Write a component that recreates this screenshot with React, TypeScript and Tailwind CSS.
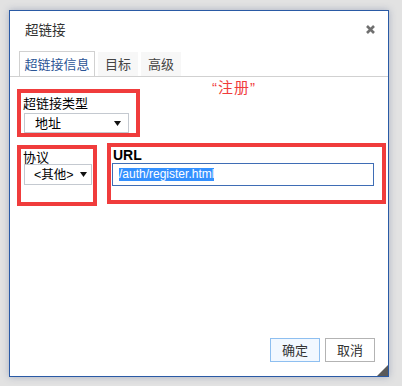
import React from "react";

const cjk = "font-['Noto_Sans_CJK_SC',sans-serif]";
const mix = "font-['Liberation_Sans','Noto_Sans_CJK_SC',sans-serif]";

function Arrow() {
  return (
    <svg width="7" height="5" viewBox="0 0 7 5" className="shrink-0">
      <path d="M0 0 L7 0 L3.5 5 Z" fill="#111" />
    </svg>
  );
}

export default function App() {
  return (
    <div className="w-[402px] h-[386px] bg-[#e2e2e2] pt-[10px] pl-[9px] overflow-hidden">
      <div className="relative w-[380px] h-[367px] bg-white border border-[#2a5aa5] shadow-[0_0_7px_rgba(60,80,130,0.35)] flex flex-col">
        {/* header */}
        <div className="h-[40px] shrink-0 flex items-center justify-between pl-[15px] pr-[13px] pb-[3px]">
          <span className={`${cjk} text-[13.5px] text-[#333]`}>超链接</span>
          <svg width="9" height="9" viewBox="0 0 9 9">
            <path d="M1 1 L8 8 M8 1 L1 8" stroke="#707070" strokeWidth="2.6" strokeLinecap="butt" />
          </svg>
        </div>
        {/* tabs */}
        <div className="h-[26px] shrink-0 border-b border-[#d1d1d1] flex items-end pl-[9px] gap-[3px]">
          <div className={`${cjk} h-[25px] w-[76px] border border-b-0 border-[#d1d1d1] bg-white text-[#2b5596] text-[13px] flex items-center justify-center`}>
            超链接信息
          </div>
          <div className={`${cjk} h-[24px] w-[40px] bg-[#f7f7f7] text-[#444] text-[13px] flex items-center justify-center`}>
            目标
          </div>
          <div className={`${cjk} h-[24px] w-[40px] bg-[#f7f7f7] text-[#444] text-[13px] flex items-center justify-center`}>
            高级
          </div>
        </div>
        {/* content */}
        <div className="flex-1 pl-[7px]">
          <div className="flex items-start">
            <div className="mt-[12px] w-[123px] h-[48px] border-[4px] border-[#f03c3c] pl-[2px]">
              <div className={`${cjk} h-[20px] leading-[20px] text-[13px] text-black`}>超链接类型</div>
              <div className="ml-[1px] w-[105px] h-[20px] border border-[#c4c9d0] flex items-center justify-between pl-[10px] pr-[7px]">
                <span className={`${cjk} text-[13px] leading-[16px] text-black`}>地址</span>
                <Arrow />
              </div>
            </div>
            <div className={`${mix} ml-[72px] mt-[2px] text-[15px] leading-[18px] tracking-[1px] text-[#f03c3c]`}>“注册”</div>
          </div>
          <div className="flex items-start mt-[6px]">
            <div className="mt-[2px] w-[80px] h-[61px] border-[4px] border-[#f03c3c] pl-[2px]">
              <div className={`${cjk} h-[15px] leading-[15px] text-[13px] text-black`}>协议</div>
              <div className="ml-[1px] w-[68px] h-[21px] border border-[#c4c9d0] flex items-center justify-between pl-[9px] pr-[4px]">
                <span className={`${mix} text-[12.5px] leading-[16px] text-black`}>&lt;其他&gt;</span>
                <Arrow />
              </div>
            </div>
            <div className="ml-[10px] w-[279px] h-[61px] border-[4px] border-[#f03c3c] pl-[1px]">
              <div className="font-['Liberation_Sans',sans-serif] font-bold h-[16px] leading-[16px] text-[14px] text-black pl-[1px]">URL</div>
              <div className="w-[262px] h-[23px] border border-[#3f6db5] flex items-center pl-[6px]">
                <span className="font-['Liberation_Sans',sans-serif] text-[12px] leading-[13px] bg-[#3390ff] text-white">
                  /auth/register.html
                </span>
              </div>
            </div>
          </div>
        </div>
        {/* footer */}
        <div className="shrink-0 flex justify-end gap-[5px] pr-[13px] pb-[14px]">
          <button className={`${cjk} w-[50px] h-[24px] border border-[#8ebff0] bg-[#f2f8ff] text-[13px] text-[#333] flex items-center justify-center`}>
            确定
          </button>
          <button className={`${cjk} w-[50px] h-[24px] border border-[#b3b3b3] bg-white text-[13px] text-[#333] flex items-center justify-center`}>
            取消
          </button>
        </div>
        <svg width="11" height="11" viewBox="0 0 11 11" className="absolute right-0 bottom-0">
          <path d="M11 0 L11 11 L0 11 Z" fill="#5a5a5a" />
        </svg>
      </div>
    </div>
  );
}
